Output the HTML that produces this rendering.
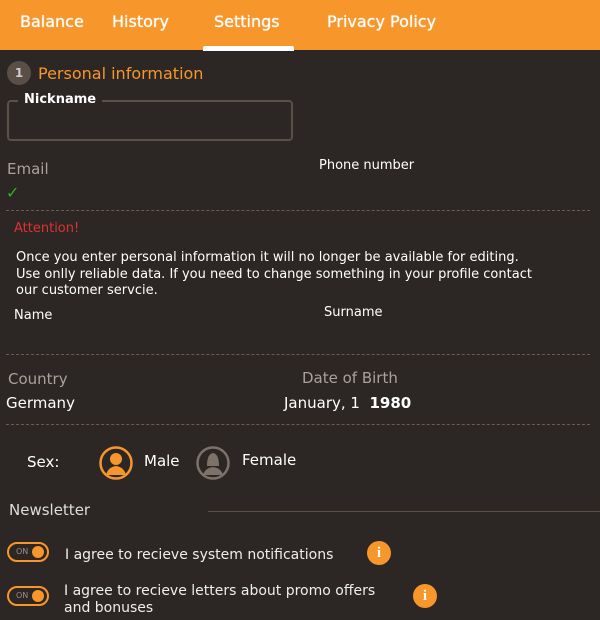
<!DOCTYPE html>
<html><head><style>
body{margin:0;width:600px;height:620px;background:#2c2724;font-family:"DejaVu Sans","Liberation Sans",sans-serif;color:#eee;position:relative;overflow:hidden}
.a{position:absolute;white-space:nowrap}
.top{position:absolute;left:0;top:0;width:600px;height:50px;background:#f7962b}
.tab{position:absolute;top:12px;font-size:16px;color:#fff;text-shadow:0 0 1px #fff}
.dash{position:absolute;left:6px;width:584px;border-top:1px dashed #6a5d4f}
.lbl{font-size:13px;color:#fff}
.gray{font-size:15px;color:#aaa29a}
.tog{position:absolute;width:42px;height:20px;border:2px solid #f7962b;border-radius:12px;box-sizing:border-box}
.tog span{position:absolute;left:7px;top:3px;font-size:8px;color:#9a8f85}
.tog i{position:absolute;right:3px;top:2px;width:12px;height:12px;border-radius:50%;background:#f7962b}
.info{position:absolute;width:24px;height:24px;border-radius:50%;background:#f7962b;color:#fff;font-weight:bold;font-size:15px;text-align:center;line-height:24px;font-family:"Liberation Serif",serif}
</style></head><body>
<div class="top"></div>
<div class="tab" style="left:20px">Balance</div>
<div class="tab" style="left:112px">History</div>
<div class="tab" style="left:214px">Settings</div>
<div class="tab" style="left:327px">Privacy Policy</div>
<div class="a" style="left:203px;top:46px;width:91px;height:5px;background:#fff;border-radius:2px 2px 0 0"></div>
<div class="a" style="left:7px;top:61px;width:24px;height:24px;border-radius:50%;background:#5a4f47;color:#ccc;font-size:12px;text-align:center;line-height:24px;font-weight:bold">1</div>
<div class="a" style="left:38px;top:64px;font-size:16px;color:#f7962b">Personal information</div>
<div class="a" style="left:7px;top:100px;width:286px;height:41px;border:2px solid #5a5045;border-radius:4px;box-sizing:border-box"></div>
<div class="a lbl" style="left:18px;top:92px;background:#2c2724;padding:0 6px;font-weight:bold">Nickname</div>
<div class="a gray" style="left:7px;top:160px">Email</div>
<div class="a" style="left:6px;top:183px;color:#2cb02c;font-size:16px">✓</div>
<div class="a lbl" style="left:319px;top:158px">Phone number</div>
<div class="dash" style="top:210px"></div>
<div class="a" style="left:14px;top:221px;font-size:13px;color:#e03030">Attention!</div>
<div class="a" style="left:16px;top:250px;font-size:13px;line-height:16.5px;color:#fff">Once you enter personal information it will no longer be available for editing.<br>Use onlly reliable data. If you need to change something in your profile contact<br>our customer servcie.</div>
<div class="a lbl" style="left:14px;top:308px">Name</div>
<div class="a lbl" style="left:324px;top:305px">Surname</div>
<div class="dash" style="top:354px"></div>
<div class="a gray" style="left:8px;top:370px">Country</div>
<div class="a" style="left:6px;top:394px;font-size:15px;color:#fff">Germany</div>
<div class="a gray" style="left:302px;top:369px">Date of Birth</div>
<div class="a" style="left:284px;top:394px;font-size:15px;color:#fff">January, 1 &nbsp;<b>1980</b></div>
<div class="dash" style="top:424px"></div>
<div class="a" style="left:27px;top:453px;font-size:15px;color:#fff">Sex:</div>
<svg class="a" style="left:99px;top:446px" width="34" height="34" viewBox="0 0 34 34"><circle cx="17" cy="17" r="15.5" fill="#2c2724" stroke="#f7962b" stroke-width="2.5"/><circle cx="17" cy="13" r="6" fill="#f7962b"/><path d="M7 29 Q9 21 17 20 Q25 21 27 29 Z" fill="#f7962b"/></svg>
<div class="a" style="left:144px;top:452px;font-size:15px;color:#fff">Male</div>
<svg class="a" style="left:196px;top:446px" width="34" height="34" viewBox="0 0 34 34"><circle cx="17" cy="17" r="15.5" fill="#2c2724" stroke="#7d7269" stroke-width="2.5"/><path d="M11 20 Q11 8 17 7 Q23 8 23 20 Z" fill="#7d7269"/><path d="M7 29 Q9 22 17 21 Q25 22 27 29 Z" fill="#7d7269"/></svg>
<div class="a" style="left:242px;top:451px;font-size:15px;color:#fff">Female</div>
<div class="a" style="left:9px;top:501px;font-size:15px;color:#ddd">Newsletter</div>
<div class="a" style="left:208px;top:511px;width:392px;border-top:1px solid #5a5045"></div>
<div class="tog" style="left:7px;top:542px"><span>ON</span><i></i></div>
<div class="a" style="left:65px;top:547px;font-size:14px;color:#eee">I agree to recieve system notifications</div>
<div class="info" style="left:367px;top:541px">i</div>
<div class="tog" style="left:7px;top:586px"><span>ON</span><i></i></div>
<div class="a" style="left:64px;top:583px;font-size:14px;line-height:17px;color:#eee">I agree to recieve letters about promo offers<br>and bonuses</div>
<div class="info" style="left:413px;top:584px">i</div>
</body></html>
